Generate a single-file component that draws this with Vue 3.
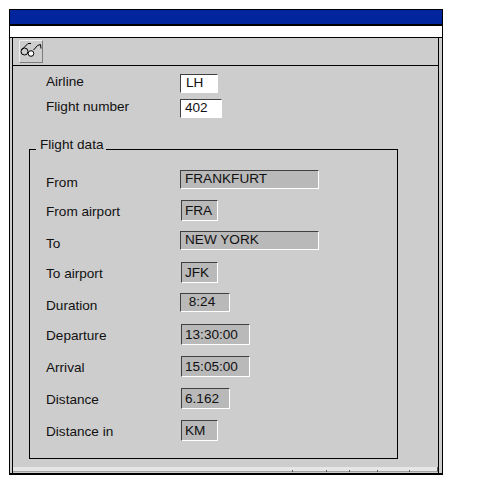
<template>
  <div class="page">
    <div class="window">
      <div class="titlebar"></div>
      <div class="menubar"></div>
      <div class="client">
        <div class="toolbar">
          <button class="tool" type="button" aria-label="Display">
            <svg width="22" height="21" viewBox="0 0 22 21" fill="none" stroke="#000" stroke-width="1">
              <path d="M1.5 9 L8 2.5 L11 2.5" />
              <ellipse cx="4.5" cy="10.5" rx="3.5" ry="3.5" />
              <circle cx="11" cy="12.5" r="2.8" fill="#fff" />
              <path d="M13.5 9 L17.5 4.5 L20.5 3.5 L21 7.5" />
            </svg>
          </button>
        </div>
        <div class="content">
          <div class="inputs">
            <div class="row row-a">
              <span class="label">Airline</span>
              <span class="field edit w-38 lh">LH</span>
            </div>
            <div class="row row-b">
              <span class="label">Flight number</span>
              <span class="field edit w-42">402</span>
            </div>
          </div>
          <fieldset class="group">
            <legend>Flight data</legend>
            <div
              v-for="r in rows"
              :key="r.label"
              class="row"
              :style="{ height: r.h + 'px' }"
            >
              <span class="label" :style="{ marginTop: r.lt + 'px' }">{{ r.label }}</span>
              <span
                class="field"
                :class="[r.w, r.tall ? 'tall' : '']"
              >{{ r.value }}</span>
            </div>
          </fieldset>
        </div>
        <div class="status">
          <i v-for="x in ticks" :key="x" class="tick" :style="{ left: x + 'px' }"></i>
        </div>
      </div>
    </div>
  </div>
</template>

<script setup>
const rows = [
  { label: "From", value: "FRANKFURT", w: "w-138", h: 30, lt: 5 },
  { label: "From airport", value: "FRA", w: "w-37", tall: true, h: 31, lt: 4 },
  { label: "To", value: "NEW YORK", w: "w-138", h: 31, lt: 5 },
  { label: "To airport", value: "JFK", w: "w-37", tall: true, h: 31, lt: 4 },
  { label: "Duration", value: " 8:24", w: "w-50", h: 31, lt: 5 },
  { label: "Departure", value: "13:30:00", w: "w-69", tall: true, h: 32, lt: 4 },
  { label: "Arrival", value: "15:05:00", w: "w-69", tall: true, h: 32, lt: 4 },
  { label: "Distance", value: "6.162", w: "w-49", tall: true, h: 32, lt: 4 },
  { label: "Distance in", value: "KM", w: "w-37", tall: true, h: 32, lt: 4 },
];

const ticks = [279, 313, 336, 364, 396];
</script>

<style>
html, body { background: #fff; }
</style>

<style scoped>
.page {
  width: 490px;
  height: 490px;
  padding: 9px 0 0 9px;
  box-sizing: border-box;
  font-family: "Liberation Sans", Arial, sans-serif;
  font-size: 13.6px;
  color: #111;
}

.window {
  width: 434px;
  height: 466px;
  box-sizing: border-box;
  border: 1px solid #000;
  border-bottom-width: 2px;
  display: flex;
  flex-direction: column;
  background: #cdcdcd;
}

.titlebar {
  flex: none;
  height: 14px;
  background: #00259c;
  border-bottom: 2px solid #000;
}

.menubar {
  flex: none;
  height: 11px;
  background: #fff;
  border-bottom: 1px solid #000;
}

.client {
  flex: 1;
  min-height: 0;
  position: relative;
  display: flex;
  flex-direction: column;
  margin: 0 3px 0 2px;
  border-left: 1px solid #000;
  border-right: 1px solid #000;
}

.toolbar {
  flex: none;
  height: 28px;
  box-sizing: border-box;
  border-bottom: 1px solid #000;
  padding: 2px 0 0 6px;
}

.tool {
  display: block;
  width: 24px;
  height: 23px;
  padding: 0;
  box-sizing: border-box;
  background: #cdcdcd;
  border: 1px solid;
  border-color: #ececec #7c7c7c #7c7c7c #ececec;
}

.tool svg { display: block; }

.content {
  flex: 1;
  padding: 8px 0 0 16px;
}

.inputs {
  height: 64px;
  padding-left: 1px;
}

.row {
  display: flex;
  align-items: flex-start;
}

.row-a { height: 25px; }
.row-b { height: 25px; }

.label {
  width: 134px;
  padding-left: 16px;
  flex: none;
  line-height: 15px;
}

.field {
  display: block;
  flex: none;
  height: 19px;
  box-sizing: border-box;
  padding-left: 4px;
  line-height: 16px;
  white-space: pre;
  background: #b9b9b9;
  border: 1px solid;
  border-color: #404040 #fff #fff #404040;
}

.field.edit { background: #fff; }
.field.lh { padding-left: 5px; }
.field.tall { height: 21px; margin-left: 1px; padding-left: 3px; line-height: 20px; }

.w-38 { width: 38px; }
.w-42 { width: 42px; }
.w-138 { width: 139px; }
.w-37 { width: 37px; }
.w-50 { width: 50px; }
.w-49 { width: 49px; }
.w-69 { width: 69px; }

.group {
  margin: 0;
  padding: 10px 0 0 0;
  width: 369px;
  height: 321px;
  box-sizing: border-box;
  border: 1px solid #000;
}

.group legend {
  margin-left: 6px;
  padding: 0 3px 8px 4px;
  line-height: 14px;
}

.status {
  position: absolute;
  left: 0;
  right: 0;
  bottom: 1px;
  height: 4px;
  background: #e6e6e6;
  border-bottom: 1px solid #a2a2a2;
  border-right: 1px solid #555;
}

.tick {
  position: absolute;
  bottom: -1px;
  width: 1px;
  height: 2px;
  background: #606060;
}
</style>
